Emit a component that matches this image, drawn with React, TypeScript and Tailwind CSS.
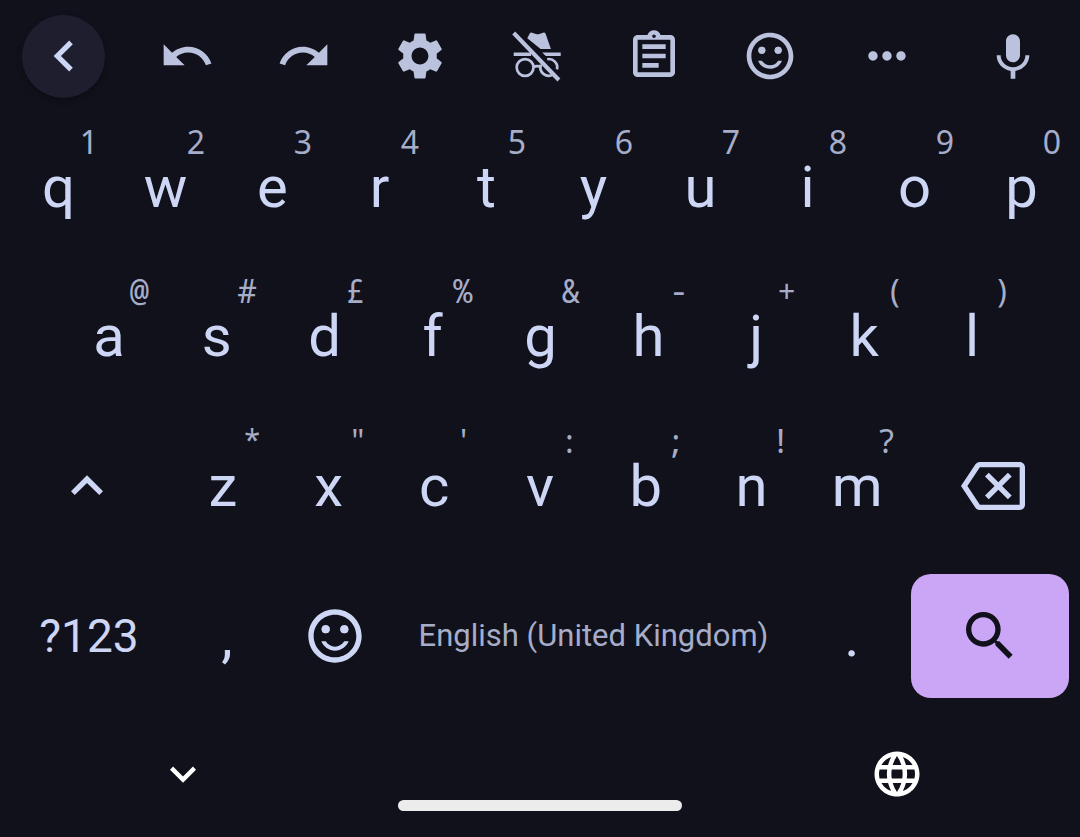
import type { ReactNode } from "react";
import {
  MdChevronLeft,
  MdUndo,
  MdRedo,
  MdSettings,
  MdOutlineAssignment,
  MdSentimentSatisfiedAlt,
  MdMoreHoriz,
  MdKeyboardArrowUp,
  MdKeyboardArrowDown,
  MdOutlineBackspace,
  MdSearch,
  MdLanguage,
} from "react-icons/md";

type KeyDef = { label: string; hint?: string };

const topRow: KeyDef[] = [..."qwertyuiop"].map((label, i) => ({ label, hint: "1234567890"[i] }));
const homeRow: KeyDef[] = [..."asdfghjkl"].map((label, i) => ({ label, hint: "@#£%&-+()"[i] }));
const lowerRow: KeyDef[] = [..."zxcvbnm"].map((label, i) => ({ label, hint: "*\"':;!?"[i] }));

function LetterKey({ label, hint = "" }: KeyDef) {
  const hintFont = /\d/.test(hint)
    ? "font-['Noto_Sans',sans-serif]"
    : "font-['Noto_Sans_Mono','Noto_Sans',sans-serif]";
  return (
    <button type="button" className="flex h-full min-w-0 flex-1 flex-col items-center pt-[14px]">
      <span className={`h-8 self-end pr-[14px] text-[32px] leading-8 text-[#a6adc8] ${hintFont}`}>{hint}</span>
      <span className="text-[58px] leading-[58px]">{label}</span>
    </button>
  );
}

function IconKey({ name, className, children }: { name: string; className: string; children: ReactNode }) {
  return (
    <button type="button" aria-label={name} className={`flex h-full items-center justify-center ${className}`}>
      {children}
    </button>
  );
}

function IncognitoOffIcon() {
  return (
    <svg viewBox="0 0 56 56" className="size-14" fill="none" stroke="currentColor">
      <path
        d="M18.3 10.2L20.6 5.8Q21.4 4.3 23 4.7L27 6Q28.7 6.5 30.4 6L34 4.7Q36 4.3 36.7 6L41.9 21H31.6Z"
        fill="currentColor"
        stroke="none"
      />
      <path d="M4.7 24.4H22V28.1H4.7ZM33.2 24.4H51.7V28.1H36.8Z" fill="currentColor" stroke="none" />
      <circle cx="16.1" cy="39.5" r="8.4" strokeWidth="2.7" />
      <path d="M24.2 39.3Q28 37.2 32 39.1" strokeWidth="2.7" />
      <path d="M31.9 36.6A8.4 8.4 0 0 0 44 46.7M38.2 31.2A8.4 8.4 0 0 1 48 41.4" strokeWidth="2.7" />
      <path d="M4.7 5L49.9 52" strokeWidth="4.1" />
    </svg>
  );
}

function MicIcon() {
  return (
    <svg viewBox="0 -.7 24 24" className="size-14" fill="currentColor">
      <path d="M12 14c1.66 0 3-1.34 3-3V5c0-1.66-1.34-3-3-3S9 3.34 9 5v6c0 1.66 1.34 3 3 3zm5.3-3c0 3-2.54 5.1-5.3 5.1S6.7 14 6.7 11H5c0 3.41 2.72 6.23 6 6.72V21h2v-3.28c3.28-.48 6-3.3 6-6.72h-1.7z" />
    </svg>
  );
}

const tools: { name: string; icon: ReactNode }[] = [
  { name: "Undo", icon: <MdUndo className="size-14" /> },
  { name: "Redo", icon: <MdRedo className="size-14" /> },
  { name: "Settings", icon: <MdSettings className="size-14" /> },
  { name: "Incognito off", icon: <IncognitoOffIcon /> },
  { name: "Clipboard", icon: <MdOutlineAssignment className="size-14" /> },
  { name: "Emoji", icon: <MdSentimentSatisfiedAlt className="size-14" /> },
  { name: "More", icon: <MdMoreHoriz className="size-14" /> },
];

export default function App() {
  return (
    <main className="flex min-h-screen flex-col bg-[#11111b] font-[Roboto,sans-serif] text-[#cdd6f4]">
      <div role="toolbar" aria-label="Keyboard tools" className="flex h-28 items-center text-[#bac2de]">
        <div className="w-[129px] pl-[22px]">
          <button
            type="button"
            aria-label="Back"
            className="flex size-[83px] items-center justify-center rounded-full bg-[#1e1e2e] text-[#cdd6f4] shadow-[0_3px_6px_rgba(0,0,0,0.3)]"
          >
            <MdChevronLeft className="size-[62px]" />
          </button>
        </div>
        {tools.map((tool) => (
          <IconKey key={tool.name} name={tool.name} className="flex-1">
            {tool.icon}
          </IconKey>
        ))}
        <IconKey name="Voice input" className="w-[135px]">
          <MicIcon />
        </IconKey>
      </div>

      <div className="flex h-[149px] px-[5px]">
        {topRow.map((k) => (
          <LetterKey key={k.label} {...k} />
        ))}
      </div>
      <div className="flex h-[150px] pr-[54px] pl-[55px]">
        {homeRow.map((k) => (
          <LetterKey key={k.label} {...k} />
        ))}
      </div>
      <div className="flex h-[150px] px-1">
        <IconKey name="Shift" className="w-[166px]">
          <MdKeyboardArrowUp className="size-16" />
        </IconKey>
        {lowerRow.map((k) => (
          <LetterKey key={k.label} {...k} />
        ))}
        <IconKey name="Backspace" className="w-[166px]">
          <MdOutlineBackspace className="size-16" />
        </IconKey>
      </div>
      <div className="flex h-[150px] items-center pr-[11px] pl-[5px]">
        <button type="button" className="h-full w-[168px] text-[46px]">
          ?123
        </button>
        <div className="flex h-full w-[108px]">
          <LetterKey label="," />
        </div>
        <IconKey name="Emoji keyboard" className="w-[108px]">
          <MdSentimentSatisfiedAlt className="size-16" />
        </IconKey>
        <button type="button" className="h-full flex-1 text-[31px] whitespace-nowrap text-[#a6adc8]">
          English (United Kingdom)
        </button>
        <div className="flex h-full w-[108px]">
          <LetterKey label="." />
        </div>
        <button
          type="button"
          aria-label="Search"
          className="ml-[5px] flex h-[124px] w-[158px] items-center justify-center rounded-[20px] bg-[#cba6f7] text-[#11111b]"
        >
          <MdSearch className="size-16" />
        </button>
      </div>

      <nav aria-label="System navigation" className="flex h-[126px] text-white">
        <IconKey name="Hide keyboard" className="w-[366px]">
          <MdKeyboardArrowDown className="size-[52px]" />
        </IconKey>
        <div className="flex flex-1 items-end justify-center pb-[26px]">
          <div className="h-[11px] w-[284px] rounded-full bg-[#ececec]" />
        </div>
        <IconKey name="Switch language" className="w-[366px]">
          <MdLanguage className="size-[54px]" />
        </IconKey>
      </nav>
    </main>
  );
}
